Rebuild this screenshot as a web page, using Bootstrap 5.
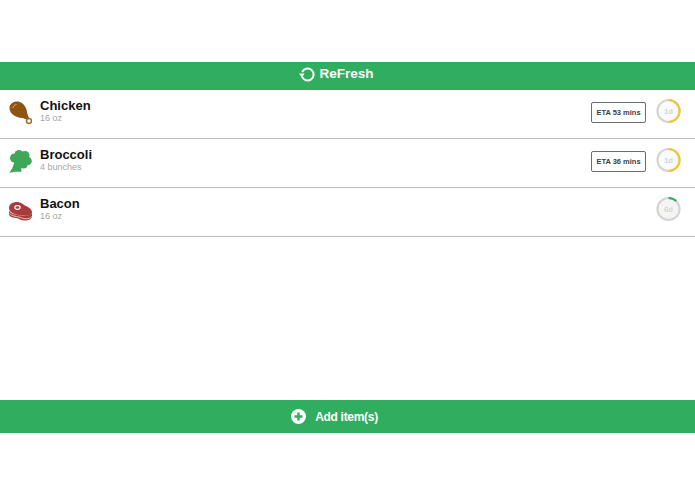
<!DOCTYPE html>
<html lang="en">

<head>
    <meta charset="UTF-8">
    <title>ReFresh</title>
    <link href="https://cdn.jsdelivr.net/npm/bootstrap@5.3.0/dist/css/bootstrap.min.css" rel="stylesheet">
    <style>
        body {
            width: 695px;
            height: 494px;
            overflow: hidden;
            background: #fff;
            font-family: "Liberation Sans", Arial, sans-serif;
            padding-top: 62px;
        }

        .app-shell {
            height: 371px;
        }

        .top-bar {
            height: 28px;
            background: #31ad60;
            color: #fff;
            font-size: 13.5px;
            font-weight: 700;
            padding: 0 22px 4px 0;
            gap: 3px;
        }

        .food-row {
            height: 49px;
            border-bottom: 1px solid #bdbdbd;
            padding: 0 14px 6px 9px;
        }

        .food-icon {
            width: 23px;
            height: 24px;
            margin-right: 8px;
            margin-top: 3px;
        }

        .food-name {
            font-size: 13px;
            font-weight: 700;
            line-height: 15px;
            color: #111;
        }

        .food-qty {
            font-size: 9px;
            line-height: 11px;
            color: #a5a5a5;
        }

        .eta-box {
            width: 55px;
            height: 21px;
            border: 1px solid #666d74;
            border-radius: 2px;
            font-size: 7.5px;
            font-weight: 700;
            color: #3a3f44;
            margin-right: 10px;
            margin-top: 3px;
        }

        .age-ring {
            width: 25px;
            height: 26px;
        }

        .age-ring text {
            font-size: 8px;
            font-weight: 700;
            fill: #d4d4d4;
        }

        .add-bar {
            height: 33px;
            background: #31ad60;
            color: #fff;
            font-size: 12px;
            font-weight: 700;
            letter-spacing: -.3px;
            gap: 9px;
            padding-right: 26px;
        }
    </style>
</head>

<body>
    <div class="app-shell d-flex flex-column">
        <div class="top-bar d-flex align-items-center justify-content-center">
            <svg width="17" height="17" viewBox="0 0 17 17">
                <path d="M3.2 6A6 6 0 1 1 3 10.500" fill="none" stroke="#fff" stroke-width="2" />
                <path d="M0 7.500h5.600L2.800 11.200z" fill="#fff" />
            </svg>
            <span>ReFresh</span>
        </div>

        <div class="food-row d-flex align-items-center">
            <svg class="food-icon" viewBox="0 0 23 24">
                <path d="M.5 7C.5 2.500 5 0 9 .5C14 1.200 17.500 6 18 11C18.300 13 19 15 20 17L18 19C16.500 18 15 17.300 13 17C7 16.500 .5 13 .5 7Z" fill="#8f5312" />
                <path d="M4 7C4 5 5.500 3.800 7.500 3.500" fill="none" stroke="#d9a766" stroke-width="1" />
                <circle cx="20" cy="20" r="2.500" fill="#fff" stroke="#a5682a" stroke-width="1.500" />
            </svg>
            <div class="flex-grow-1">
                <div class="food-name">Chicken</div>
                <div class="food-qty">16 oz</div>
            </div>
            <div class="eta-box d-flex align-items-center justify-content-center">ETA 53 mins</div>
            <svg class="age-ring" viewBox="0 0 26 26">
                <circle cx="13" cy="13" r="11.500" fill="#fafafa" stroke="#d4d4d4" stroke-width="2.200" />
                <path d="M13 1.500A11.500 11.500 0 0 1 13 24.500" fill="none" stroke="#f0c63c" stroke-width="2.200" />
                <text x="13" y="16" text-anchor="middle">1d</text>
            </svg>
        </div>

        <div class="food-row d-flex align-items-center">
            <svg class="food-icon" viewBox="0 0 23 24">
                <g fill="#3fa858">
                    <circle cx="5.500" cy="8" r="4.500" />
                    <circle cx="10" cy="4.500" r="4.500" />
                    <circle cx="16" cy="5.500" r="4.500" />
                    <circle cx="18.500" cy="11" r="4.300" />
                    <circle cx="14.500" cy="14.500" r="4" />
                    <circle cx="11" cy="9" r="5" />
                    <path d="M.5 23C2 20 4.500 17 5.500 11L13 15C12.500 18 12 20 12.500 22C8 21.500 4 22 .5 23Z" />
                </g>
            </svg>
            <div class="flex-grow-1">
                <div class="food-name">Broccoli</div>
                <div class="food-qty">4 bunches</div>
            </div>
            <div class="eta-box d-flex align-items-center justify-content-center">ETA 36 mins</div>
            <svg class="age-ring" viewBox="0 0 26 26">
                <circle cx="13" cy="13" r="11.500" fill="#fafafa" stroke="#d4d4d4" stroke-width="2.200" />
                <path d="M13 1.500A11.500 11.500 0 0 1 13 24.500" fill="none" stroke="#f0c63c" stroke-width="2.200" />
                <text x="13" y="16" text-anchor="middle">1d</text>
            </svg>
        </div>

        <div class="food-row d-flex align-items-center">
            <svg class="food-icon" viewBox="0 0 23 24">
                <path d="M0 11V15C0 17.500 3 18.500 7 19C10 19.500 12 21.500 16 21.500C20 21.500 23 20 23 17V14C23 16 18 17 12 16.500C6 16 0 14 0 11Z" fill="#a83c3c" />
                <path d="M.5 14.500C3 17 7 17.500 10 18C12 18.500 14 19.800 17 19.800C19.500 19.800 21.500 19 22.700 17.500" fill="none" stroke="#f3dede" stroke-width=".8" />
                <path d="M0 9C0 5 4 3 8 3C12 3 14 5.500 17 7C20 8.500 23 10 23 13.500C23 16.500 18 17 13 16.500C6 16 0 13.500 0 9Z" fill="#a83c3c" />
                <ellipse cx="8.500" cy="8.500" rx="2.600" ry="1.800" fill="none" stroke="#fff" stroke-width="1.200" />
            </svg>
            <div class="flex-grow-1">
                <div class="food-name">Bacon</div>
                <div class="food-qty">16 oz</div>
            </div>
            <svg class="age-ring" viewBox="0 0 26 26">
                <circle cx="13" cy="13" r="11.500" fill="#f4f4f4" stroke="#d4d4d4" stroke-width="2.200" />
                <path d="M13 1.500A11.500 11.500 0 0 1 21.100 4.800" fill="none" stroke="#31ad60" stroke-width="2.200" />
                <text x="13" y="16" text-anchor="middle">6d</text>
            </svg>
        </div>

        <div class="flex-grow-1"></div>

        <div class="add-bar d-flex align-items-center justify-content-center">
            <svg width="15" height="15" viewBox="0 0 15 15">
                <circle cx="7.500" cy="7.500" r="7.500" fill="#fff" />
                <path d="M7.500 3.500v8M3.500 7.500h8" stroke="#31ad60" stroke-width="2.400" />
            </svg>
            <span>Add item(s)</span>
        </div>
    </div>

    <script src="https://cdn.jsdelivr.net/npm/bootstrap@5.3.0/dist/js/bootstrap.bundle.min.js"></script>
</body>

</html>
